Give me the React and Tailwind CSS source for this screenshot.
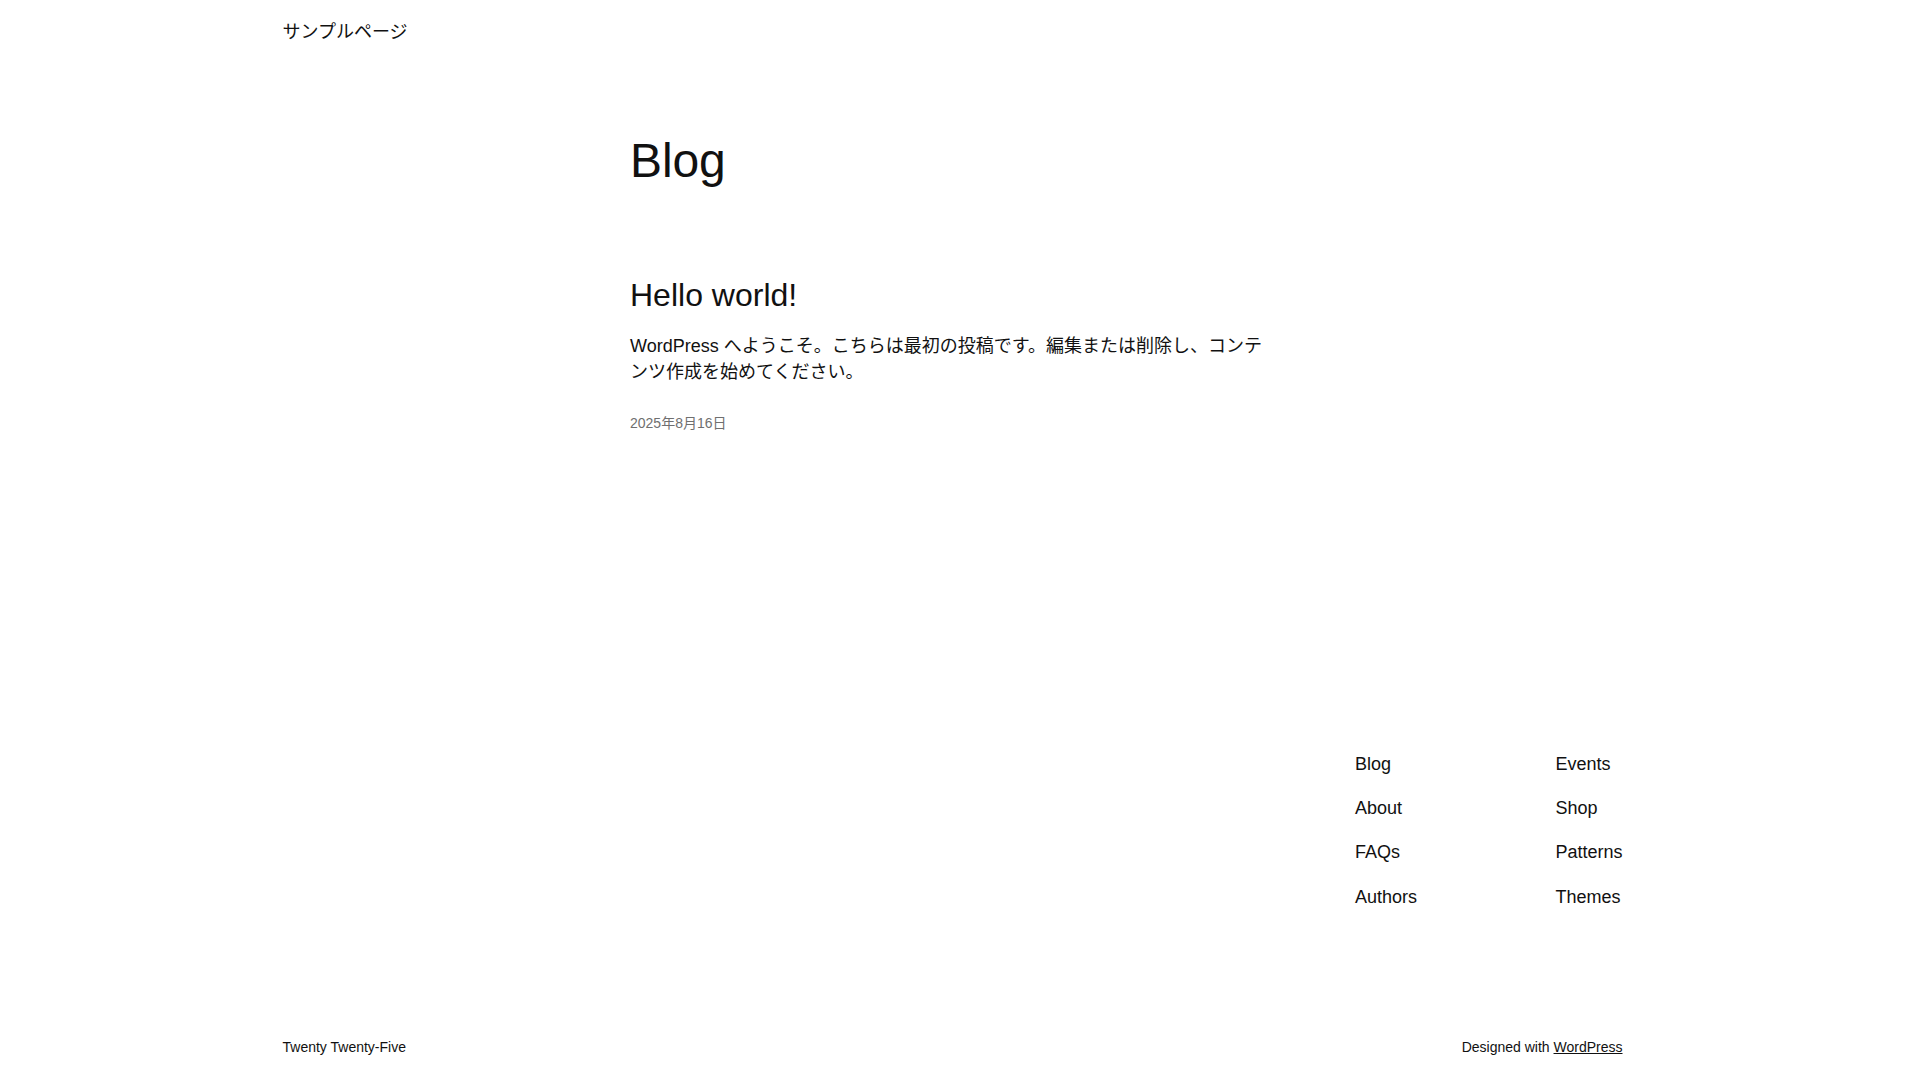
import React from "react";

const FONT = { fontFamily: '"Liberation Sans", "Noto Sans CJK JP", sans-serif' };

export default function App() {
  const col1 = ["Blog", "About", "FAQs", "Authors"];
  const col2 = ["Events", "Shop", "Patterns", "Themes"];
  return (
    <div className="min-h-[1120px] bg-white pr-[15px] text-[#111111]" style={FONT}>
      <header className="mx-auto w-[1340px] pt-[20px]">
        <a href="#" className="text-[18px] leading-[25px] text-[#111111]">サンプルページ</a>
      </header>

      <main className="mx-auto w-[645px]">
        <h1 className="mt-[87px] text-[48px] leading-[58px] font-normal tracking-[-0.1px]">Blog</h1>
        <article>
          <h2 className="mt-[86px] text-[32px] leading-[38px] font-normal">Hello world!</h2>
          <p className="mt-[19px] text-[18px] leading-[26px]">
            WordPress へようこそ。こちらは最初の投稿です。編集または削除し、コンテンツ作成を始めてください。
          </p>
          <div className="mt-[28px] text-[14px] leading-[20px] text-[#6f6f6f]">2025年8月16日</div>
        </article>
      </main>

      <footer className="mx-auto w-[1340px] pb-[40px]">
        <div className="mt-[318px] flex justify-end gap-[138.5px]">
          <nav className="flex flex-col gap-[18.2px]">
            {col1.map((t) => (
              <a key={t} href="#" className="text-[18px] leading-[26px]">{t}</a>
            ))}
          </nav>
          <nav className="flex flex-col gap-[18.2px]">
            {col2.map((t) => (
              <a key={t} href="#" className="text-[18px] leading-[26px]">{t}</a>
            ))}
          </nav>
        </div>
        <div className="mt-[127px] flex justify-between text-[14px] leading-[20px]">
          <span>Twenty Twenty-Five</span>
          <span>
            Designed with <a href="#" className="underline">WordPress</a>
          </span>
        </div>
      </footer>
    </div>
  );
}
